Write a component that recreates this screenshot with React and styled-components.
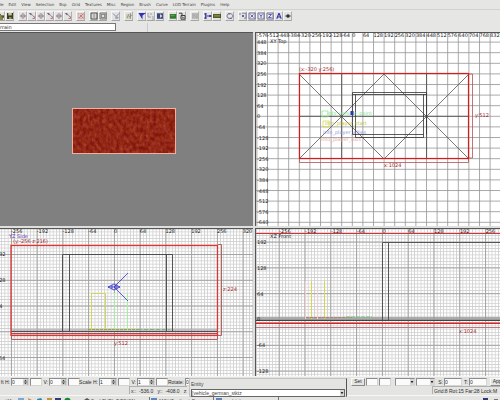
import React from 'react';
import styled, { createGlobalStyle } from 'styled-components';

const GlobalStyle = createGlobalStyle`
    * {
        box-sizing: border-box;
    }

    body {
        margin: 0;
        background: #e6e6e4;
        overflow: hidden;
    }

    button, input, select {
        font: inherit;
        color: inherit;
        margin: 0;
        padding: 0;
        border: 0;
        border-radius: 0;
        background: none;
        appearance: none;
    }
`;

const Window = styled.div`
    display: flex;
    flex-direction: column;
    height: 100vh;
    overflow: hidden;
    font-family: 'Liberation Sans', Arial, sans-serif;
    font-size: 5px;
    line-height: 6px;
    color: #2c2c2c;
    background: #e6e6e4;
`;

const MenuBar = styled.nav`
    display: flex;
    gap: 5px;
    height: 9px;
    font-family: 'DejaVu Sans', sans-serif;
    font-size: 4px;
    color: #444;
`;

const MenuItem = styled.button`
    flex: none;
    height: 9px;
`;

const Toolbar = styled.div`
    display: flex;
    gap: 4px;
    height: 13px;
    margin-left: -4px;
    padding-top: 1px;
    border-top: 1px solid #d2d2d0;
`;

const ToolGroup = styled.div`
    display: flex;
`;

const ToolButton = styled.button`
    display: flex;
    align-items: center;
    justify-content: center;
    width: 9px;
    height: 10px;
    border: 1px solid #f6f6f5;
    border-right-color: #b0b0ae;
    border-bottom-color: #a4a4a2;
    background: #e2e2e0;

    svg {
        flex: none;
        opacity: .85;
    }
`;

const TextureRow = styled.div`
    display: flex;
    align-items: flex-start;
    height: 10px;
    padding-top: 1px;
`;

const TextureInput = styled.input`
    width: 116px;
    height: 8px;
    border: 1px solid #777;
    border-left: 0;
    background: #fff;
    font-family: 'DejaVu Sans', sans-serif;
`;

const Divider = styled.span`
    width: 1px;
    height: 9px;
    margin-left: 31px;
    background: #cacac8;
`;

const Views = styled.main`
    flex: 1;
    display: grid;
    grid-template-columns: 253fr 245fr;
    grid-template-rows: 194fr 148fr;
    gap: 2px;
    min-height: 0;
    background: #dededc;
`;

const Pane = styled.section`
    min-width: 0;
    min-height: 0;
    overflow: hidden;
    border-top: 1px solid #555;
    border-left: ${({ $edge }) => ($edge ? '0' : '1px solid #555')};
    background: ${({ $camera }) => ($camera ? '#808080' : '#fff')};
`;

const Drawing = styled.svg`
    display: block;
    width: 100%;
    height: 100%;
    font-family: 'DejaVu Sans', sans-serif;
    font-size: 5px;
`;

const Footer = styled.footer`
    position: relative;
    flex: none;
    height: 24px;
    background: #e4e4e2;
    border-top: 1px solid #f4f4f3;
`;

const SurfaceBar = styled.div`
    display: grid;
    grid-template-columns: 351fr 149fr;
    height: 9px;
`;

const Fields = styled.div`
    display: flex;
    align-items: center;
    gap: 1px;
    min-width: 0;
    overflow: hidden;
    white-space: nowrap;
`;

const FieldLabel = styled.label`
    display: flex;
    align-items: center;
    justify-content: flex-end;
    flex: none;
    width: ${({ $width }) => $width}px;
`;

const Box = styled.span`
    display: flex;
    flex: none;
    width: ${({ $width }) => $width}px;
    height: 8px;
    border: 1px solid #8c8c8a;
    border-right-color: #d4d4d2;
    border-bottom-color: #d4d4d2;
    background: #fbfbfb;

    input, select {
        width: 100%;
        min-width: 0;
        height: 6px;
    }

    svg {
        flex: none;
    }
`;

const PushButton = styled.button`
    flex: none;
    width: ${({ $width }) => $width}px;
    height: 8px;
    border: 1px solid #f8f8f8;
    border-right-color: #8a8a88;
    border-bottom-color: #8a8a88;
    line-height: 5px;
    text-align: center;
`;

const StatusBar = styled.div`
    display: flex;
    justify-content: space-between;
    height: 9px;
    padding-left: 129px;
    white-space: pre;
`;

const StatusCell = styled.div`
    width: ${({ $width }) => $width}px;
    height: 8px;
    padding: 1px 0 0 1px;
    border: 1px solid #b0b0ae;
    border-right: 0;
    border-bottom: 0;
    overflow: hidden;
`;

const TaskBar = styled.div`
    display: flex;
    height: 5px;
    padding-top: 1px;
    border-top: 1px solid #f6f6f5;
    overflow: hidden;
`;

const EntityPopup = styled.div`
    position: absolute;
    top: 1px;
    left: 189px;
    width: 158px;
    height: 19px;
    padding: 2px 1px 0 1px;
    border: 1px solid #c2c2c0;
    border-right-color: #555;
    background: #e4e4e2;
    color: #444;
`;

const EntityCombo = styled.div`
    display: flex;
    height: 8px;
    margin-top: 2px;
    border: 1px solid #666;
    background: #fff;

    select {
        flex: 1;
        height: 6px;
    }
`;

const Arrow = () => (
    <svg width="4" height="6" viewBox="0 0 4 6">
        <rect width="4" height="6" fill="#d6d6d4" />
        <path d="M.7 2h2.6L2 4.2z" fill="#222" />
    </svg>
);

const Steps = () => (
    <svg width="5" height="6" viewBox="0 0 5 6">
        <rect width="5" height="6" fill="#d6d6d4" />
        <path d="M1 2.4h3L2.5.8zM1 3.6h3L2.5 5.2z" fill="#333" />
        <path d="M4.5 0v6M0 3h5" stroke="#999" strokeWidth=".5" />
    </svg>
);

const icons = {
    open: <><path d="M0 3h6v5H0z" fill="#777a22" /><path d="M1 2h3v1M4 5l3-2v3z" fill="#333" /></>,
    save: <><path d="M1 1h6v6H1z" fill="#20220c" /><path d="M2.3 1h3.4v2.4H2.3z" fill="#c6c68a" /><path d="M3 5h2.5v2H3z" fill="#81833c" /></>,
    flip: <><path d="M4 1v6" stroke="#a04050" strokeWidth=".8" /><path d="M3 2.6v2.8L1 4zM5 2.6v2.8L7 4z" fill="#9a9fb8" stroke="#555a75" strokeWidth=".4" /></>,
    turn: <><path d="M2 2l2 .6 2 2.400M4.500 6.500h2V4.500" fill="none" stroke="#a05a68" strokeWidth=".9" /><path d="M.8 1h2.500v2.500z" fill="#4c5480" /></>,
    select: <><path d="M1 1.5h6v5.2H1z" fill="#e4c6c2" stroke="#a66a66" strokeWidth=".6" strokeDasharray="1 .6" /><path d="M2 6l4-4M3 3l3 3" stroke="#aa4a48" strokeWidth=".7" /></>,
    hollow: <><path d="M1 1h6v6H1z" fill="none" stroke="#222" strokeWidth=".9" /><path d="M2.8 3h2.5M2.8 5h2.5" stroke="#444" strokeWidth=".7" /></>,
    merge: <path d="M1 1h6v6H1zM2.300 2.300h3.400v3.400H2.300z" fill="none" stroke="#333" strokeWidth=".7" />,
    clip: <><path d="M1 1.5l3 3 3-3M4 4.5V7" fill="none" stroke="#6f7da8" /><circle cx="5.3" cy="5.6" r="1.2" fill="#8791b3" /></>,
    tex: <><path d="M1 2h4v5H1z" fill="#c9cfa9" /><path d="M2 6l2-4M5.5 1v6M4 5l3-2" stroke="#666a60" strokeWidth=".7" /></>,
    cursor: <path d="M.5 1H8L4.5 3.5V7.5L3.5 6z" fill="#1010bc" />,
    scale: <path d="M1 1v4h3M5 5h2M5 7h2M3 2h2" fill="none" stroke="#8d8da4" strokeWidth=".9" />,
    camera: <><path d="M1 1.3h6v5.5H1z" fill="#202d6c" /><path d="M4 2l2.5 2L4 6z" fill="#d5d7e8" /></>,
    green: <><path d="M.8 2h6.4v4.7H.8z" fill="#146413" /><path d="M1.6 2.8h4v1.5h-4z" fill="#349d2e" /></>,
    lock: <><path d="M1 1.2h3v3.4M3 3.5h4v3.7H3z" fill="none" stroke="#222" /><path d="M4.4 5h1.2v1.2H4.4z" fill="#222" /></>,
    grid: <><path d="M1 1h6v6H1z" fill="#b4b4b2" /><path d="M2 2l4 4M2 6V2M6 2v4" stroke="#989896" strokeWidth=".7" /></>,
    nodes: <><path d="M1.6 1v6M2 4h4" stroke="#1d1d86" /><path d="M.5 1h2v2h-2zM.5 5h2v2h-2zM5 3h2.4v2H5z" fill="#2424a4" /></>,
    strip: <><path d="M0 2h8v4H0z" fill="#40420d" /><path d="M1 3.4h6v1H1z" fill="#9c9c3a" /></>,
    patch: <path d="M2.3 1.7h3L7.2 4l-2 2.6-3-.4L.8 4zM3 1v1.6M5 5.4V7" fill="#e6e6ee" stroke="#43436a" strokeWidth=".8" />,
    eye: <><path d="M.5 4L4 2l3.5 2L4 6z" fill="#6c6f80" /><circle cx="4" cy="4" r="1.5" fill="#111" /></>,
    letterA: <path d="M1.8 6.800L3.800 1.500h.4L6.200 6.800M2.800 5h2.600" fill="none" stroke="#1414a8" strokeWidth="1.1" />,
    axis: <><path d="M1 1h6v6H1z" fill="#e9e9f2" stroke="#44446c" strokeWidth=".8" /><path d="M2.5 2.5l3 3M5.5 2.5l-3 3" stroke="#2525b8" strokeWidth=".8" /></>,
    axisY: <><path d="M1 1h6v6H1z" fill="#e9e9f2" stroke="#44446c" strokeWidth=".8" /><path d="M2.5 2.3L4 4l1.5-1.7M4 4v2" fill="none" stroke="#2525b8" strokeWidth=".8" /></>,
    axisZ: <><path d="M1 1h6v6H1z" fill="#e9e9f2" stroke="#44446c" strokeWidth=".8" /><path d="M2.5 2.5h3l-3 3h3" fill="none" stroke="#2525b8" strokeWidth=".8" /></>,
    bracket: <><path d="M0 2h2M3 1.2h4v5h-2" fill="none" stroke="#55557a" strokeWidth=".8" /><path d="M3 3l2 2M5 3L3 5" stroke="#2525a8" strokeWidth=".8" /></>,
};

const Icon = ({ name, size = 8 }) => (
    <svg width={size} height={size} viewBox="0 0 8 8">{icons[name]}</svg>
);

const menus = ['le', 'Edit', 'View', 'Selection', 'Bsp', 'Grid', 'Textures', 'Misc', 'Region', 'Brush', 'Curve', 'LOD Terrain', 'Plugins', 'Help'];

const tools = [
    ['open', 'save'],
    ['flip', 'turn', 'flip', 'turn', 'flip', 'turn'],
    ['select'],
    ['hollow', 'merge'],
    ['clip'],
    ['tex'],
    ['cursor', 'scale', 'camera'],
    ['green', 'lock'],
    ['grid'],
    ['nodes', 'strip'],
    ['patch'],
    ['bracket', 'axis', 'axisY', 'axisZ', 'letterA', 'eye'],
];

// x, y is where world 0,0 falls in the pane, step is the size of 64 units
const Grid = ({ id, x, y, step, minor }) => (
    <>
        <defs>
            {minor && (
                <pattern id={`${id}-minor`} x={x} y={y} width={step / 8} height={step / 8} patternUnits="userSpaceOnUse">
                    <path d={`M.4 0V${step / 8}M0 .4H${step / 8}`} stroke="#d0d0d0" strokeWidth=".8" />
                </pattern>
            )}
            <pattern id={`${id}-major`} x={x} y={y} width={step} height={step} patternUnits="userSpaceOnUse">
                <path d={`M.5 0V${step}M0 .5H${step}`} stroke={minor ? '#a2a2a2' : '#949494'} strokeWidth={minor ? 1 : 0.8} />
            </pattern>
        </defs>
        {minor && <rect width="100%" height="100%" fill={`url(#${id}-minor)`} />}
        <rect width="100%" height="100%" fill={`url(#${id}-major)`} />
    </>
);

const range = (from, to) => Array.from({ length: to - from + 1 }, (_, i) => from + i);

const Rulers = ({ x, y, step, cols, rows, left = 1 }) => (
    <g fill="#222">
        {range(...cols).map(n => <text key={`c${n}`} x={x + n * step} y="4">{n * 64}</text>)}
        {range(...rows).map(n => <text key={`r${n}`} x={left} y={y - n * step + 2}>{n * 64}</text>)}
    </g>
);

const CameraView = () => (
    <Drawing>
        <defs>
            <filter id="rust" x="0" y="0" width="100%" height="100%" colorInterpolationFilters="sRGB">
                <feTurbulence type="fractalNoise" baseFrequency=".3 .22" numOctaves="3" seed="6" />
                <feColorMatrix values=".25 .1 0 0 .4  .25 .1 0 0 -.02  .2 0 .1 0 -.06  0 0 0 0 1" />
            </filter>
        </defs>
        <rect x="72" y="75" width="104" height="46" fill="#932a14" filter="url(#rust)" />
        <rect x="72.5" y="75.5" width="103" height="45" fill="none" stroke="#efb0a2" />
    </Drawing>
);

const TopView = () => (
    <Drawing>
        <Grid id="xy" x={95.8} y={82.8} step={10.6} />
        <Rulers x={96.3} y={83.3} step={10.6} cols={[-9, 13]} rows={[-10, 7]} />
        <text x="14" y="10" fill="#222">XY Top</text>
        <g fill="none" stroke="#333" strokeWidth=".8">
            <path d="M43 41l85 85 85-85M43 126l85-85 85 85" stroke="#555" />
            <path d="M85.7 41v85M170.6 41v85M43 83.3h170" stroke="#444" />
            <path d="M96.5 59.5h74M96.5 61.5h74M96.5 59.5v42M99.5 61.5v43M96.5 101.5h71M99.5 104.5h68M167.5 61.5v43M170.5 59.5v42" />
        </g>
        <text x="71" y="82" fill="#79e68a">info_vehicle_point</text>
        <text x="69" y="92" fill="#c5c52a">info_player_start</text>
        <text x="67" y="101" fill="#8f92df">info_player_allies</text>
        <text x="65" y="108" fill="#eba6a2">info_player_axis</text>
        <g fill="none" strokeWidth=".8">
            <path d="M66 78h6v6h-6z" stroke="#8df093" />
            <path d="M67 88h6v6h-6z" stroke="#dbdb50" />
        </g>
        <path d="M94.5 78h3v4h-3z" fill="#2636bd" />
        <rect x="43.5" y="40.5" width="169" height="85" fill="none" stroke="#d91a1a" strokeWidth="1.2" />
        <path d="M43.5 126v3.5h169V126M213 41h3.5v84H213" fill="none" stroke="#b05050" strokeWidth=".8" />
        <g fill="#a8262a">
            <text x="43" y="38">(x:-320  y:256)</text>
            <text x="128" y="134">x:1024</text>
            <text x="219" y="84">y:512</text>
        </g>
    </Drawing>
);

const SideView = () => (
    <Drawing>
        <Grid id="yz" x={113.9} y={102.3} step={25.75} minor />
        <Rulers x={114} y={102.7} step={25.75} cols={[-4, 5]} rows={[1, 3]} left={-4} />
        <text x="-3" y="131" fill="#222">-64</text>
        <text x="9" y="9" fill="#5b34b0">YZ Side</text>
        <text x="13" y="14" fill="#a8262a">(y:-256 z:216)</text>
        <path d="M11 100h206v3H11z" fill="#aaa" opacity=".7" />
        <g fill="none" stroke="#444" strokeWidth=".9">
            <path d="M62.5 102V25.5h110V102M69.5 25v77M166.5 25v77M11 102.5h206" />
            <path d="M11 104.5h206" stroke="#6a4b66" />
        </g>
        <path d="M91.5 102V64.5h14V102" fill="none" stroke="#d4d45a" />
        <path d="M114.5 64v38M127.5 64v38" stroke="#a5efa3" />
        <path d="M88 100.5h50" stroke="#98a632" strokeDasharray="3 1" />
        <path d="M138 100.5h32" stroke="#7cb480" strokeDasharray="4 2" />
        <path d="M108 58l6-3 6 3-6 3zM108 58h12M112 56v4M116 56v4M114 58l14-14M114 58l14 14" fill="none" stroke="#3434ca" strokeWidth=".8" />
        <rect x="11" y="16.5" width="206.5" height="90" fill="none" stroke="#e03434" strokeWidth="1.3" />
        <path d="M11 104.8h206" stroke="#d04040" strokeWidth=".8" />
        <path d="M11.5 107v3.5h206V107M218 15.5h3.5v91H218" fill="none" stroke="#b05050" strokeWidth=".9" />
        <g fill="#a8262a">
            <text x="114" y="116">y:512</text>
            <text x="223" y="62">z:224</text>
        </g>
    </Drawing>
);

const FrontView = () => (
    <Drawing>
        <Grid id="xz" x={125.9} y={90} step={25.8} minor />
        <rect y="88" width="100%" height="4" fill="#999" opacity=".8" />
        <rect y="91" width="100%" height="1" fill="#444" />
        <rect y="93" width="100%" height="1" fill="#d98085" />
        <rect y="94" width="100%" height="1" fill="#d52424" />
        <rect y="98" width="100%" height="1" fill="#c07474" />
        <rect y="4" width="100%" height="1" fill="#df2c34" />
        <path d="M126.5 91V13.5H600M132.5 13.5V91" fill="none" stroke="#555" />
        <path d="M55.5 52v38M68.5 52v38" stroke="#d6d64e" />
        <path d="M49.5 52v38M61.5 56v34" stroke="#f2d0d0" />
        <path d="M50 88.5h46" stroke="#b8806a" strokeDasharray="3 1" />
        <path d="M90 88h26" stroke="#77c07a" strokeDasharray="4 1" />
        <Rulers x={126.5} y={90.4} step={25.8} cols={[-4, 4]} rows={[-2, 3]} />
        <text x="14" y="9" fill="#222">XZ Front</text>
        <text x="203" y="104" fill="#a8262a">x:1024</text>
    </Drawing>
);

const Stepper = ({ id, label, value, width }) => (
    <>
        <FieldLabel $width={width} htmlFor={id}>{label}</FieldLabel>
        <Box $width={18}>
            <input id={id} defaultValue={value} />
            <Steps />
        </Box>
        <Box $width={12}><input aria-label={`${id} step`} /></Box>
    </>
);

const App = () => {
    return (
        <Window>
            <GlobalStyle />
            <MenuBar>
                {menus.map(name => <MenuItem key={name}>{name}</MenuItem>)}
            </MenuBar>
            <Toolbar>
                {tools.map((group, i) => (
                    <ToolGroup key={i}>
                        {group.map((name, j) => (
                            <ToolButton key={j} aria-label={name}><Icon name={name} /></ToolButton>
                        ))}
                    </ToolGroup>
                ))}
            </Toolbar>
            <TextureRow>
                <TextureInput aria-label="Texture" defaultValue="rrain" />
                <Divider />
            </TextureRow>
            <Views>
                <Pane $edge $camera><CameraView /></Pane>
                <Pane><TopView /></Pane>
                <Pane $edge><SideView /></Pane>
                <Pane><FrontView /></Pane>
            </Views>
            <Footer>
                <SurfaceBar>
                    <Fields>
                        <Stepper id="shift-h" label="ft H:" value="0" width={10} />
                        <Stepper id="shift-v" label="V:" value="0" width={5} />
                        <Stepper id="scale-h" label="Scale H:" value="1" width={17} />
                        <Stepper id="scale-v" label="V:" value="1" width={5} />
                        <FieldLabel $width={15} htmlFor="rotate">Rotate:</FieldLabel>
                        <Box $width={18}><input id="rotate" defaultValue="0" /></Box>
                    </Fields>
                    <Fields>
                        <PushButton $width={14}>Set</PushButton>
                        <Box $width={12}><input aria-label="Columns" /></Box>
                        <Box $width={12}><input aria-label="Rows" /></Box>
                        <FieldLabel $width={2} />
                        <Box $width={20}><select aria-label="Shader" /><Arrow /></Box>
                        <Box $width={19}><select aria-label="Mode" /><Arrow /></Box>
                        <FieldLabel $width={7} htmlFor="fit-s">S:</FieldLabel>
                        <Box $width={18}><input id="fit-s" defaultValue="0" /></Box>
                        <FieldLabel $width={5} htmlFor="fit-t">T:</FieldLabel>
                        <Box $width={18}><input id="fit-t" defaultValue="0" /></Box>
                        <FieldLabel $width={1} />
                        <PushButton $width={18}>Apply</PushButton>
                    </Fields>
                </SurfaceBar>
                <StatusBar>
                    <StatusCell $width={58}>x::  -536.0   y::  -408.0   z::</StatusCell>
                    <StatusCell $width={68}>Grid:8 Rot:15 Far:28 Lock:M</StatusCell>
                </StatusBar>
                <TaskBar>
                    <Drawing>
                        <g fill="#333">
                            <text x="0" y="6">urtM</text>
                            <text x="91" y="6">2 - LEVEL DESIGN</text>
                            <text x="159" y="6">MOHRadiant Doc</text>
                            <text x="226" y="6">vehicle_german</text>
                        </g>
                        <path d="M18 1h6v5h-6z" fill="#7ca7d4" />
                        <path d="M28 1l4 2-3 4z" fill="#c98a4a" />
                        <path d="M37 2l4-1 3 5h-6z" fill="#2687b0" />
                        <path d="M47 1h5v5h-5z" fill="#bf9440" />
                        <path d="M55 1h6v5h-6z" fill="#33397b" />
                        <circle cx="67.5" cy="4" r="3.2" fill="#16892b" />
                        <path d="M84 3l3-2 3 2v2h-6z" fill="#555" />
                        <path d="M149.5 0v6M213.5 0v6M278.5 0v6" stroke="#777" />
                        <path d="M151 1h6v5h-6zM216 1h6v5h-6z" fill="#5e83bd" />
                        <path d="M483 1h5v5h-5z" fill="#343474" />
                        <path d="M494 2h4v3h-4z" fill="#777" />
                    </Drawing>
                </TaskBar>
                <EntityPopup>
                    <label htmlFor="entity">Entity</label>
                    <EntityCombo>
                        <select id="entity">
                            <option>[vehicle_german_stktz</option>
                        </select>
                        <Arrow />
                    </EntityCombo>
                </EntityPopup>
            </Footer>
        </Window>
    );
};

export default App;
